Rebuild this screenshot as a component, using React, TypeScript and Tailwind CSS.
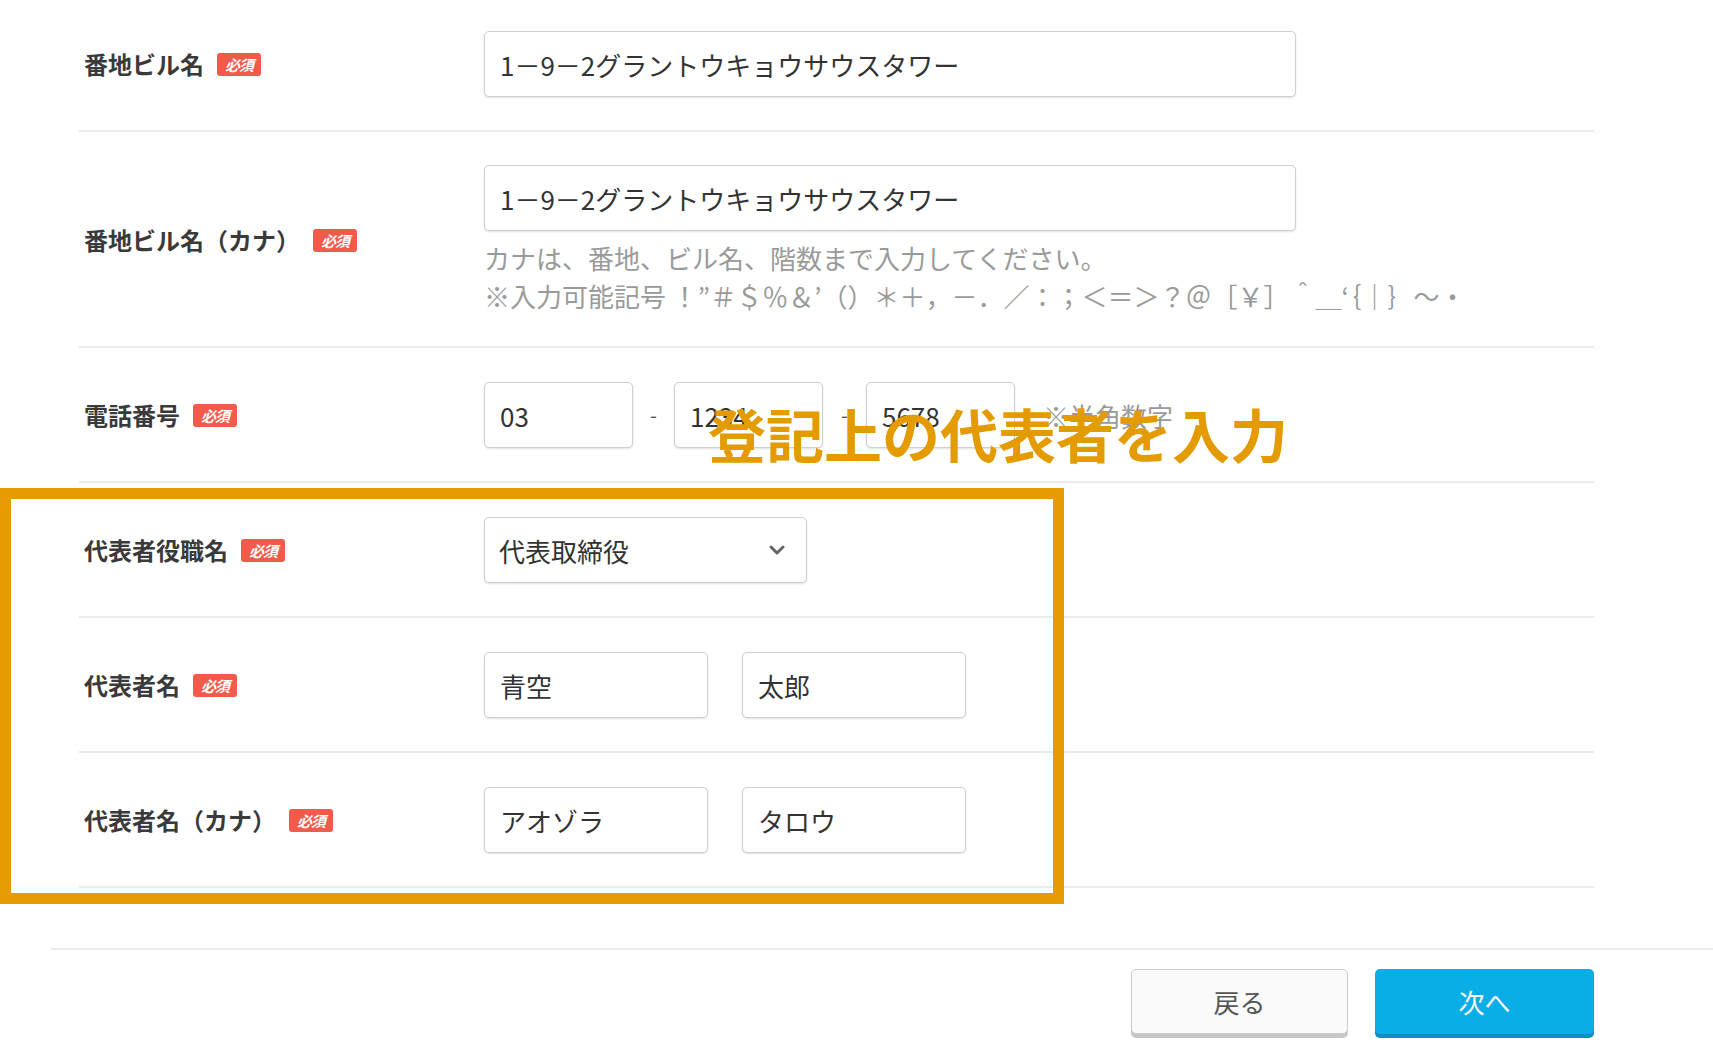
// App.tsx
// 会社情報フォーム（番地・電話番号・代表者）＋ 注釈オーバーレイ

import React from 'react'

const FONT = "font-['Noto_Sans_CJK_JP','Noto_Sans',sans-serif]"

function Badge() {
    return (
        <span className="ml-[13px] inline-flex items-center justify-center w-[44px] h-[23px] rounded-[3px] bg-[#f25a4b] text-white text-[15px] font-bold leading-none tracking-[-1px] italic">
            必須
        </span>
    )
}

function Label({ text }: { text: string }) {
    return (
        <div className="w-[405px] pl-[5px] flex items-center flex-none">
            <span className="text-[24px] font-bold text-[#3a3a3a] leading-none">{text}</span>
            <Badge />
        </div>
    )
}

function TextBox({ value, width }: { value: string; width: string }) {
    return (
        <input
            readOnly
            value={value}
            className={`${width} h-[66px] px-[15px] rounded-[5px] border border-[#cfcfcf] shadow-[0_1px_2px_rgba(0,0,0,0.12)] bg-white text-[26px] text-[#333] outline-none`}
        />
    )
}

function Row({ label, children, first }: { label: string; children: React.ReactNode; first?: boolean }) {
    return (
        <div className={`flex items-center border-b-2 border-[#ebebeb] ${first ? 'pt-[31px] pb-[33px]' : 'pt-[34px] pb-[33px]'}`}>
            <Label text={label} />
            <div className="flex-1">{children}</div>
        </div>
    )
}

export default function App() {
    return (
        <div className={`relative w-[1713px] h-[1049px] bg-white overflow-hidden ${FONT}`}>
            {/* フォーム本体 */}
            <div className="ml-[79px] w-[1515px]">
                <Row label="番地ビル名" first>
                    <TextBox value="1－9－2グラントウキョウサウスタワー" width="w-[812px]" />
                </Row>

                <div className="flex items-center border-b-2 border-[#ebebeb] pt-[33px] pb-[31px]">
                    <Label text="番地ビル名（カナ）" />
                    <div className="flex-1">
                        <TextBox value="1－9－2グラントウキョウサウスタワー" width="w-[812px]" />
                        <p className="mt-[8px] text-[26px] leading-[38px] text-[#9a9a9a] whitespace-nowrap">
                            カナは、番地、ビル名、階数まで入力してください。
                            <br />
                            ※入力可能記号 ！”＃＄％＆’（）＊＋，－．／：；＜＝＞？＠［￥］＾＿‘｛｜｝～・
                        </p>
                    </div>
                </div>

                <Row label="電話番号">
                    <div className="flex items-center">
                        <TextBox value="03" width="w-[149px]" />
                        <span className="w-[41px] text-center text-[20px] text-[#555]">-</span>
                        <TextBox value="1234" width="w-[149px]" />
                        <span className="w-[43px] text-center text-[20px] text-[#555]">-</span>
                        <TextBox value="5678" width="w-[149px]" />
                        <span className="ml-[28px] text-[26px] text-[#9a9a9a]">※半角数字</span>
                    </div>
                </Row>

                <Row label="代表者役職名">
                    <div className="relative w-[323px] h-[66px] px-[14px] flex items-center rounded-[5px] border border-[#cfcfcf] shadow-[0_1px_2px_rgba(0,0,0,0.12)] bg-white">
                        <span className="text-[26px] text-[#333]">代表取締役</span>
                        <svg className="ml-auto mr-[7px]" width="16" height="10" viewBox="0 0 16 10">
                            <polyline points="2,2 8,8 14,2" fill="none" stroke="#666" strokeWidth="3" strokeLinecap="round" strokeLinejoin="round" />
                        </svg>
                    </div>
                </Row>

                <Row label="代表者名">
                    <div className="flex items-center gap-[34px]">
                        <TextBox value="青空" width="w-[224px]" />
                        <TextBox value="太郎" width="w-[224px]" />
                    </div>
                </Row>

                <Row label="代表者名（カナ）">
                    <div className="flex items-center gap-[34px]">
                        <TextBox value="アオゾラ" width="w-[224px]" />
                        <TextBox value="タロウ" width="w-[224px]" />
                    </div>
                </Row>
            </div>

            {/* フッター */}
            <div className="mt-[60px] ml-[51px] border-t-2 border-[#ebebeb] flex justify-end gap-[27px] pr-[119px] pt-[19px]">
                <button type="button" className="w-[217px] h-[65px] rounded-[5px] border border-[#cccccc] bg-[#fafafa] shadow-[0_4px_0_#c8c8c8] text-[26px] text-[#555]">
                    戻る
                </button>
                <button type="button" className="w-[219px] h-[65px] rounded-[5px] bg-[#0aaee6] shadow-[0_4px_0_#0b8fc3] text-[26px] text-white">
                    次へ
                </button>
            </div>

            {/* 注釈：枠 */}
            <div className="absolute left-0 top-[488px] w-[1064px] h-[416px] border-[11px] border-[#e39b00] pointer-events-none" />

            {/* 注釈：テキスト */}
            <div className="absolute left-[708px] top-[404px] text-[58px] font-bold leading-none text-[#e39b00] whitespace-nowrap">
                登記上の代表者を入力
            </div>
        </div>
    )
}
